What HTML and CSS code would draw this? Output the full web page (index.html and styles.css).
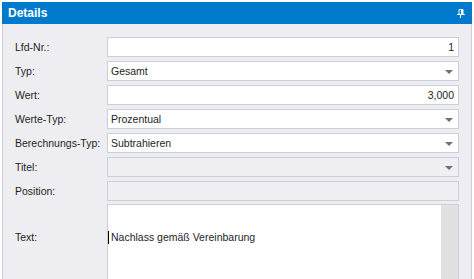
FILE: index.html
```html
<!DOCTYPE html>
<html lang="de">
<head>
    <meta charset="UTF-8">
    <title>Details</title>
    <link rel="stylesheet" href="styles.css">
</head>
<body>

<div class="panel">
    <header class="panel-head">
        <span class="panel-title">Details</span>
        <svg class="pin" width="8" height="9" viewBox="0 0 8 9">
            <path d="M2 0.5h4v5h-4z" fill="none" stroke="#fff" stroke-width="1"/>
            <rect x="4" y="0" width="2" height="6" fill="#fff"/>
            <rect x="0" y="5" width="8" height="1" fill="#fff"/>
            <rect x="3" y="6" width="1" height="3" fill="#fff"/>
        </svg>
    </header>

    <div class="form">
        <label class="lbl">Lfd-Nr.:</label>
        <div class="field num">1</div>

        <label class="lbl">Typ:</label>
        <div class="field combo">Gesamt<span class="arrow"></span></div>

        <label class="lbl">Wert:</label>
        <div class="field num">3,000</div>

        <label class="lbl">Werte-Typ:</label>
        <div class="field combo">Prozentual<span class="arrow"></span></div>

        <label class="lbl">Berechnungs-Typ:</label>
        <div class="field combo">Subtrahieren<span class="arrow"></span></div>

        <label class="lbl">Titel:</label>
        <div class="field combo disabled"><span class="arrow"></span></div>

        <label class="lbl">Position:</label>
        <div class="field disabled"></div>

        <label class="lbl memo-lbl">Text:</label>
        <div class="memo">
            <div class="memo-text"><span class="caret"></span>Nachlass gemäß Vereinbarung</div>
            <div class="scrollbar"></div>
        </div>
    </div>
</div>

</body>
</html>
```

FILE: styles.css
```css
body {
    margin: 0;
    background: #ffffff;
    font-family: "Liberation Sans", Arial, sans-serif;
    font-size: 10.5px;
    color: #1e1e1e;
    overflow: hidden;
}
.panel {
    margin: 2px 2px 0 2px;
    height: 300px;
    background: #eeeef2;
    border-left: 1px solid #cccedb;
    border-right: 1px solid #cccedb;
}
.panel-head {
    display: flex;
    justify-content: space-between;
    align-items: center;
    height: 22px;
    margin: 0 -1px;
    padding: 0 7px 0 6px;
    background: #007acc;
    color: white;
}
.panel-title {
    font-weight: bold;
    font-size: 12px;
}
.pin {
    display: block;
}
.form {
    display: grid;
    grid-template-columns: 92px 352px;
    row-gap: 4px;
    padding: 13px 0 0 12px;
}
.lbl {
    display: flex;
    align-items: center;
    height: 20px;
}
.field {
    position: relative;
    box-sizing: border-box;
    height: 20px;
    padding: 0 4px 0 3px;
    line-height: 18px;
    background: #ffffff;
    border: 1px solid #cccedb;
}
.num {
    text-align: right;
}
.disabled {
    background: #f0f0f4;
}
.arrow {
    position: absolute;
    right: 5px;
    top: 8px;
    border-left: 4px solid transparent;
    border-right: 4px solid transparent;
    border-top: 4px solid #717171;
}
.memo-lbl {
    height: 66px;
    margin-top: -1px;
}
.memo {
    display: flex;
    box-sizing: border-box;
    height: 90px;
    margin-top: -1px;
    background: #ffffff;
    border-left: 1px solid #cccedb;
    border-top: 1px solid #cccedb;
    border-right: 1px solid #cccedb;
}
.memo-text {
    flex: 1;
    padding: 25px 0 0 0;
    line-height: 14px;
}
.caret {
    display: inline-block;
    width: 1px;
    height: 13px;
    margin-right: 2px;
    vertical-align: -3px;
    background: #000;
}
.scrollbar {
    width: 17px;
    background: #e1e1e1;
}
```
